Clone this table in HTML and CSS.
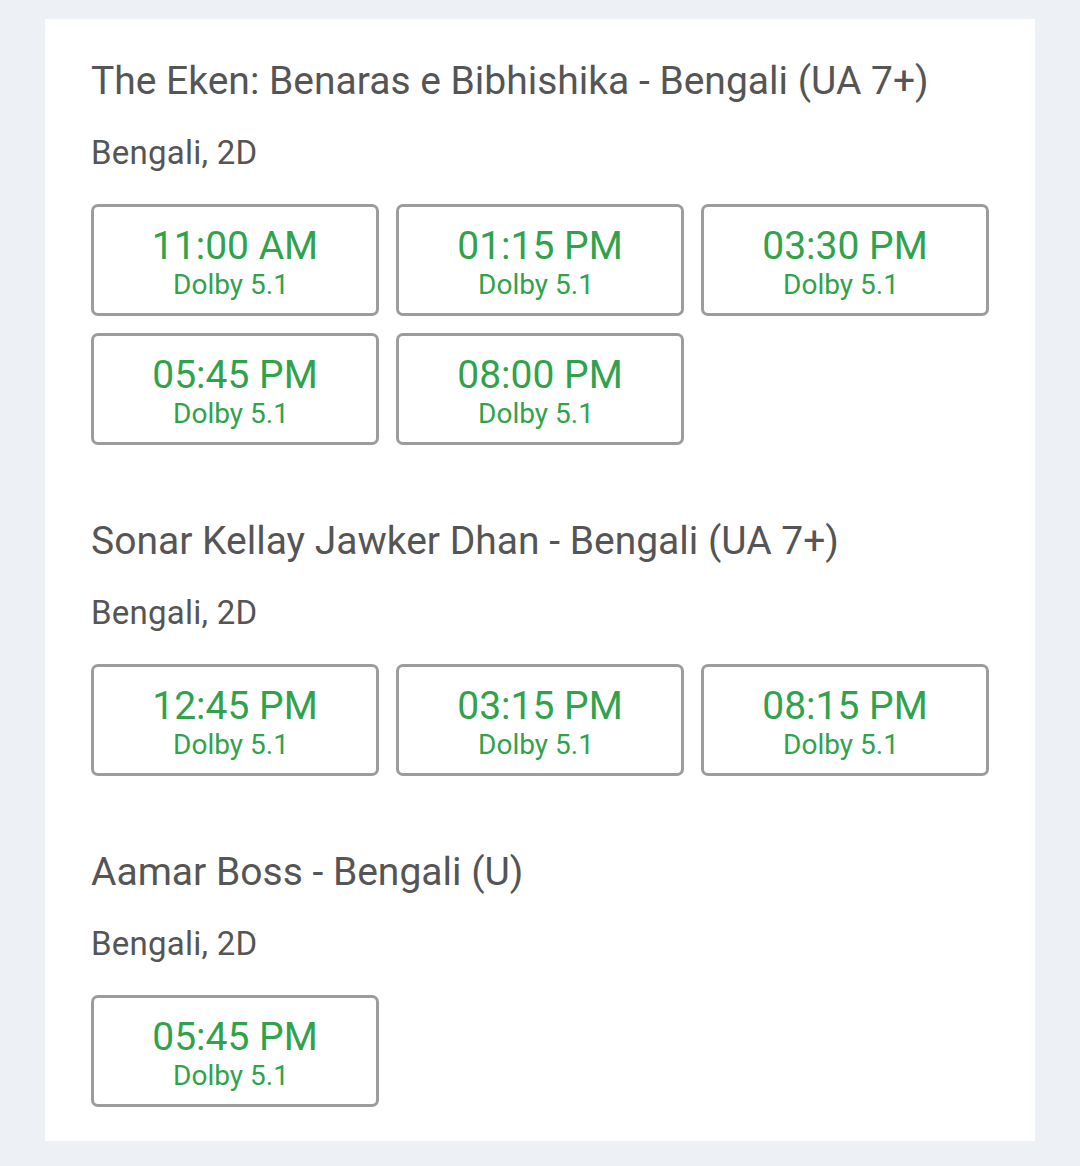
FILE: index.html
```html
<!DOCTYPE html>
<html>
<head>
<meta charset="utf-8">
<link rel="stylesheet" href="styles.css">
</head>
<body>
<div class="card">
  <section class="movie">
    <h2 class="title">The Eken: Benaras e Bibhishika - Bengali (UA 7+)</h2>
    <div class="format">Bengali, 2D</div>
    <div class="times">
      <div class="slot"><div class="time">11:00 AM</div><div class="audio">Dolby 5.1</div></div>
      <div class="slot"><div class="time">01:15 PM</div><div class="audio">Dolby 5.1</div></div>
      <div class="slot"><div class="time">03:30 PM</div><div class="audio">Dolby 5.1</div></div>
      <div class="slot"><div class="time">05:45 PM</div><div class="audio">Dolby 5.1</div></div>
      <div class="slot"><div class="time">08:00 PM</div><div class="audio">Dolby 5.1</div></div>
    </div>
  </section>
  <section class="movie">
    <h2 class="title">Sonar Kellay Jawker Dhan - Bengali (UA 7+)</h2>
    <div class="format">Bengali, 2D</div>
    <div class="times">
      <div class="slot"><div class="time">12:45 PM</div><div class="audio">Dolby 5.1</div></div>
      <div class="slot"><div class="time">03:15 PM</div><div class="audio">Dolby 5.1</div></div>
      <div class="slot"><div class="time">08:15 PM</div><div class="audio">Dolby 5.1</div></div>
    </div>
  </section>
  <section class="movie">
    <h2 class="title">Aamar Boss - Bengali (U)</h2>
    <div class="format">Bengali, 2D</div>
    <div class="times">
      <div class="slot"><div class="time">05:45 PM</div><div class="audio">Dolby 5.1</div></div>
    </div>
  </section>
</div>
</body>
</html>
```
FILE: styles.css
```css
html, body {
  margin: 0;
  padding: 0;
  background: #edf0f5;
}
body {
  font-family: Roboto, "Liberation Sans", sans-serif;
  padding-top: 19px;
  height: 1166px;
  box-sizing: border-box;
}
.card {
  background: #ffffff;
  margin: 0 45px;
  padding: 38px 46px 34px 46px;
}
.movie + .movie {
  margin-top: 72px;
}
.title {
  margin: 0;
  font-weight: 400;
  font-size: 39px;
  line-height: 48px;
  color: #555555;
}
.format {
  margin-top: 28px;
  font-size: 33px;
  letter-spacing: 0.25px;
  line-height: 40px;
  color: #555555;
}
.times {
  margin-top: 31px;
  display: grid;
  grid-template-columns: repeat(3, 288px);
  gap: 17px;
}
.slot {
  box-sizing: border-box;
  height: 112px;
  border: 3px solid #9c9c9c;
  border-radius: 7px;
  padding-top: 19px;
  text-align: center;
  color: #30a24b;
}
.time {
  font-size: 39px;
  line-height: 40px;
}
.audio {
  margin-top: 4px;
  padding-right: 8px;
  font-size: 28px;
  line-height: 30px;
}
```
